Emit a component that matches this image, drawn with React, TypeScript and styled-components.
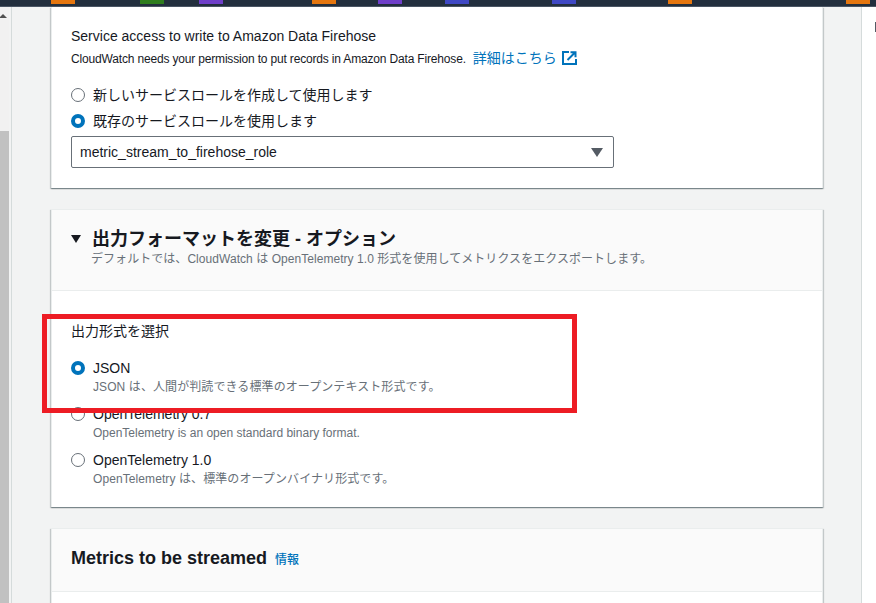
import React from 'react'
import styled, { createGlobalStyle } from 'styled-components'

const GlobalStyle = createGlobalStyle`
  html, body {
    margin: 0;
    padding: 0;
    height: 100%;
    overflow: hidden;
    background: #f2f3f3;
  }
  body {
    font-family: "Liberation Sans", "Noto Sans CJK JP", sans-serif;
    font-size: 14px;
    color: #16191f;
  }
`

const Page = styled.div`
  width: 876px;
  height: 603px;
  overflow: hidden;
  position: relative;
  display: flex;
  flex-direction: column;
`

const TopBar = styled.div`
  flex: none;
  height: 5px;
  padding-bottom: 1px;
  background: #232f3e;
  border-bottom: 1px solid #4a5564;
  position: relative;
`

const Swatch = styled.span<{ $x: number; $color: string }>`
  position: absolute;
  top: 0;
  left: ${(p) => p.$x}px;
  width: 24px;
  height: 4px;
  background: ${(p) => p.$color};
`

const Body = styled.div`
  flex: 1;
  min-height: 0;
  display: flex;
`

const Scrollbar = styled.div`
  flex: none;
  width: 9px;
  background: #f1f1f1;
  display: flex;
  flex-direction: column;
  align-items: flex-start;
  padding-top: 7px;
  box-sizing: border-box;
`

const ScrollArrow = styled.div`
  width: 0;
  height: 0;
  margin-left: -1px;
  border-left: 4px solid transparent;
  border-right: 4px solid transparent;
  border-bottom: 4px solid #505050;
`

const ScrollThumb = styled.div`
  margin-top: 113px;
  width: 9px;
  flex: 1;
  background: #c1c1c1;
`

const Content = styled.div`
  flex: none;
  width: 851px;
  margin-left: 2px;
  border-left: 1px solid #d5dbdb;
  border-right: 1px solid #d5dbdb;
  box-sizing: border-box;
  padding: 0 38px 0 39px;
`

const SidePanel = styled.div`
  flex: 1;
  background: #fff;
  position: relative;
`

const SideHandle = styled.span`
  position: absolute;
  top: 15px;
  right: 0;
  width: 1px;
  height: 10px;
  background: #545b64;
`

const Card = styled.section`
  background: #fff;
  border-left: 1px solid #eaeded;
  border-right: 1px solid #eaeded;
  box-shadow: 0 1px 1px 0 rgba(0, 28, 36, 0.3), 1px 1px 1px 0 rgba(0, 28, 36, 0.15),
    -1px 1px 1px 0 rgba(0, 28, 36, 0.15);
  margin-bottom: 21px;
`

const CardBody = styled.div<{ $h: number; $top?: number }>`
  box-sizing: border-box;
  height: ${(p) => p.$h}px;
  padding: ${(p) => p.$top ?? 0}px 19px 0;
`

const CardHeader = styled.header<{ $h: number }>`
  box-sizing: border-box;
  height: ${(p) => p.$h}px;
  background: #fafafa;
  border-top: 1px solid #eaeded;
  border-bottom: 1px solid #eaeded;
  padding: 17px 19px 0;
`

const FieldLabel = styled.div`
  font-size: 14px;
  line-height: 20px;
  color: #16191f;
`

const FieldHint = styled.div`
  font-size: 12px;
  line-height: 18px;
  margin-top: 4px;
  letter-spacing: -0.17px;
  display: flex;
  align-items: center;
`

const DocLink = styled.a`
  color: #0073bb;
  font-size: 14px;
  letter-spacing: 0;
  margin-left: 7px;
  margin-top: -2px;
  display: inline-flex;
  align-items: center;
  gap: 5px;
`

const RadioRow = styled.label<{ $gap?: number }>`
  display: flex;
  align-items: flex-start;
  gap: 8px;
  margin-top: ${(p) => p.$gap ?? 0}px;
`

const RadioDot = styled.span<{ $checked?: boolean }>`
  flex: none;
  box-sizing: border-box;
  width: 14px;
  height: 14px;
  margin-top: 3px;
  border-radius: 50%;
  border: ${(p) => (p.$checked ? '4px solid #0073bb' : '1.5px solid #687078')};
  background: #fff;
`

const RadioText = styled.div`
  line-height: 20px;
  font-size: 14px;
`

const RadioHint = styled.div<{ $spread?: boolean }>`
  font-size: 12px;
  line-height: 16px;
  color: #687078;
  margin-top: 1px;
  letter-spacing: ${(p) => (p.$spread ? '0.09px' : '0')};
`

const SelectBox = styled.div`
  box-sizing: border-box;
  width: 543px;
  height: 32px;
  margin-top: 5px;
  border: 1px solid #687078;
  border-radius: 2px;
  padding: 0 8px;
  display: flex;
  align-items: center;
  justify-content: space-between;
  line-height: 20px;
`

const Caret = styled.span`
  width: 0;
  height: 0;
  margin-right: 2px;
  border-left: 6px solid transparent;
  border-right: 6px solid transparent;
  border-top: 9px solid #545b64;
`

const HeaderRow = styled.div`
  display: flex;
  align-items: center;
  gap: 11px;
`

const ExpandCaret = styled.span`
  width: 0;
  height: 0;
  border-left: 5px solid transparent;
  border-right: 5px solid transparent;
  border-top: 8px solid #16191f;
`

const Title = styled.h2`
  margin: 0;
  font-size: 18px;
  line-height: 24px;
  font-weight: 700;
  color: #16191f;
`

const HeaderHint = styled.div`
  font-size: 12px;
  line-height: 16px;
  color: #687078;
  margin-left: 20px;
  letter-spacing: 0.05px;
`

const InfoLink = styled.a`
  color: #0073bb;
  font-size: 12px;
  font-weight: 500;
  margin-left: 8px;
`

const Highlight = styled.div`
  position: absolute;
  left: 42px;
  top: 314px;
  width: 535px;
  height: 99px;
  box-sizing: border-box;
  border: 5px solid #ed1c24;
  pointer-events: none;
`

const ExternalIcon = () => (
  <svg width="15" height="14" viewBox="0 0 15 14" fill="none" stroke="#0073bb" strokeWidth="2">
    <path d="M7 1H1v12h13V8" />
    <path d="M5.5 9L12.5 2M8.5 1.2h5v5" />
  </svg>
)

const swatches: [number, string][] = [
  [51, '#e5760f'],
  [140, '#2f7d1e'],
  [199, '#6f3fc9'],
  [312, '#e5760f'],
  [378, '#6f3fc9'],
  [445, '#3f48c4'],
  [552, '#3f48c4'],
  [668, '#e5760f'],
  [846, '#e5760f'],
]

export default function App() {
  return (
    <Page>
      <GlobalStyle />
      <TopBar>
        {swatches.map(([x, color]) => (
          <Swatch key={x} $x={x} $color={color} />
        ))}
      </TopBar>
      <Body>
        <Scrollbar>
          <ScrollArrow />
          <ScrollThumb />
        </Scrollbar>
        <Content>
          <Card>
            <CardBody $h={181} $top={19}>
              <FieldLabel>Service access to write to Amazon Data Firehose</FieldLabel>
              <FieldHint>
                CloudWatch needs your permission to put records in Amazon Data Firehose.
                <DocLink>
                  詳細はこちら
                  <ExternalIcon />
                </DocLink>
              </FieldHint>
              <RadioRow $gap={17}>
                <RadioDot />
                <RadioText>新しいサービスロールを作成して使用します</RadioText>
              </RadioRow>
              <RadioRow $gap={6}>
                <RadioDot $checked />
                <RadioText>既存のサービスロールを使用します</RadioText>
              </RadioRow>
              <SelectBox>
                metric_stream_to_firehose_role
                <Caret />
              </SelectBox>
            </CardBody>
          </Card>
          <Card>
            <CardHeader $h={82}>
              <HeaderRow>
                <ExpandCaret />
                <Title>出力フォーマットを変更 - オプション</Title>
              </HeaderRow>
              <HeaderHint>デフォルトでは、CloudWatch は OpenTelemetry 1.0 形式を使用してメトリクスをエクスポートします。</HeaderHint>
            </CardHeader>
            <CardBody $h={216} $top={30}>
              <FieldLabel>出力形式を選択</FieldLabel>
              <RadioRow $gap={17}>
                <RadioDot $checked />
                <div>
                  <RadioText>JSON</RadioText>
                  <RadioHint $spread>JSON は、人間が判読できる標準のオープンテキスト形式です。</RadioHint>
                </div>
              </RadioRow>
              <RadioRow $gap={9}>
                <RadioDot />
                <div>
                  <RadioText>OpenTelemetry 0.7</RadioText>
                  <RadioHint>OpenTelemetry is an open standard binary format.</RadioHint>
                </div>
              </RadioRow>
              <RadioRow $gap={9}>
                <RadioDot />
                <div>
                  <RadioText>OpenTelemetry 1.0</RadioText>
                  <RadioHint $spread>OpenTelemetry は、標準のオープンバイナリ形式です。</RadioHint>
                </div>
              </RadioRow>
            </CardBody>
          </Card>
          <Card>
            <CardHeader $h={64}>
              <HeaderRow>
                <Title>
                  Metrics to be streamed
                  <InfoLink>情報</InfoLink>
                </Title>
              </HeaderRow>
            </CardHeader>
            <CardBody $h={60} />
          </Card>
        </Content>
        <SidePanel>
          <SideHandle />
        </SidePanel>
      </Body>
      <Highlight />
    </Page>
  )
}
